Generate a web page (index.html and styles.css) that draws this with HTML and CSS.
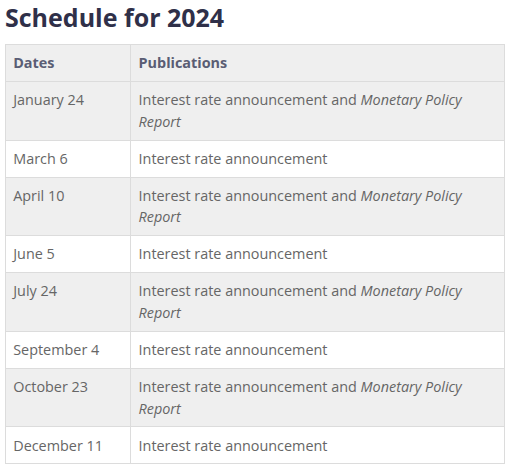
FILE: index.html
```html
<!DOCTYPE html>
<html lang="en">
<head>
<meta charset="utf-8">
<link rel="stylesheet" href="styles.css">
</head>
<body>
<main class="page">
<h2 class="title">Schedule for 2024</h2>
<table class="schedule">
<thead>
<tr><th class="col-date">Dates</th><th>Publications</th></tr>
</thead>
<tbody>
<tr><td>January 24</td><td>Interest rate announcement and <em>Monetary Policy Report</em></td></tr>
<tr><td>March 6</td><td>Interest rate announcement</td></tr>
<tr><td>April 10</td><td>Interest rate announcement and <em>Monetary Policy Report</em></td></tr>
<tr><td>June 5</td><td>Interest rate announcement</td></tr>
<tr><td>July 24</td><td>Interest rate announcement and <em>Monetary Policy Report</em></td></tr>
<tr><td>September 4</td><td>Interest rate announcement</td></tr>
<tr><td>October 23</td><td>Interest rate announcement and <em>Monetary Policy Report</em></td></tr>
<tr><td>December 11</td><td>Interest rate announcement</td></tr>
</tbody>
</table>
</main>
</body>
</html>
```
FILE: styles.css
```css
html, body {
  margin: 0;
  padding: 0;
  background: #fff;
}
.page {
  padding: 0 1px 0 5px;
  font-family: "Open Sans", "Liberation Sans", sans-serif;
}
.title {
  margin: 0;
  height: 44px;
  font-size: 25px;
  line-height: 34px;
  font-weight: 700;
  color: #2f3049;
}
.schedule {
  width: 500px;
  border-collapse: collapse;
  font-size: 14.4px;
  line-height: 1.5;
  color: #666;
}
.schedule th, .schedule td {
  border: 1px solid #dcdcdc;
  padding: 0.5em;
  text-align: left;
  vertical-align: top;
}
.schedule th {
  font-weight: 700;
  color: #5a5d74;
}
.col-date {
  width: 110px;
}
.schedule thead tr,
.schedule tbody tr:nth-child(odd) {
  background: #efefef;
}
.schedule em {
  font-style: italic;
}
```
